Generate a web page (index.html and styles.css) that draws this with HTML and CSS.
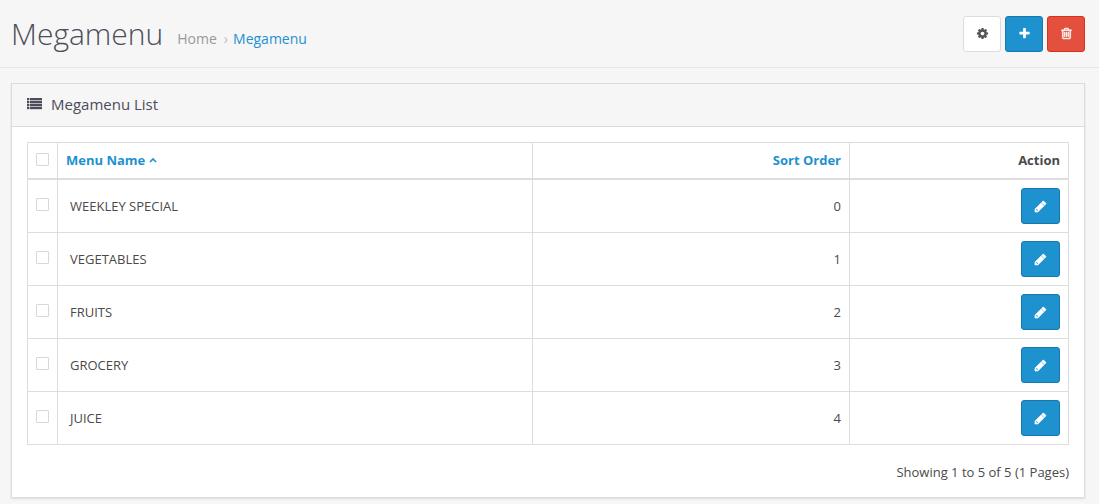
FILE: index.html
```html
<!DOCTYPE html>
<html lang="en">
<head>
    <meta charset="UTF-8">
    <meta name="viewport" content="width=device-width, initial-scale=1.0">
    <title>Megamenu</title>
    <link rel="stylesheet" href="styles.css">
</head>
<body>
    <!-- Icons -->
    <svg class="sprite" aria-hidden="true">
        <symbol id="cog" viewBox="0 0 1792 1792"><path d="M1152 896q0-106-75-181t-181-75-181 75-75 181 75 181 181 75 181-75 75-181zm512-109v222q0 12-8 23t-20 13l-185 28q-19 54-39 91 35 50 107 138 10 12 10 25t-9 23q-27 37-99 108t-94 71q-12 0-26-9l-138-108q-44 23-91 38-16 136-29 186-7 28-36 28h-222q-14 0-24.5-8.5t-11.5-21.5l-28-184q-49-16-90-37l-141 107q-10 9-25 9-14 0-25-11-126-114-165-168-7-10-7-23 0-12 8-23 15-21 51-66.5t54-70.5q-27-50-41-99l-183-27q-13-2-21-12.5t-8-23.5v-222q0-12 8-23t19-13l186-28q14-46 39-92-40-57-107-138-10-12-10-24 0-10 9-23 26-36 98.5-107.5t94.5-71.5q13 0 26 10l138 107q44-23 91-38 16-136 29-186 7-28 36-28h222q14 0 24.5 8.5t11.5 21.5l28 184q49 16 90 37l142-107q9-9 24-9 13 0 25 10 129 119 165 170 7 8 7 22 0 12-8 23-15 21-51 66.5t-54 70.5q26 50 41 98l183 28q13 2 21 12.5t8 23.5z"/></symbol>
        <symbol id="plus" viewBox="0 0 1792 1792"><path d="M1600 736v192q0 40-28 68t-68 28h-416v416q0 40-28 68t-68 28h-192q-40 0-68-28t-28-68v-416h-416q-40 0-68-28t-28-68v-192q0-40 28-68t68-28h416v-416q0-40 28-68t68-28h192q40 0 68 28t28 68v416h416q40 0 68 28t28 68z"/></symbol>
        <symbol id="trash" viewBox="0 0 1792 1792"><path stroke="currentColor" stroke-width="60" d="M704 736v576q0 14-9 23t-23 9h-64q-14 0-23-9t-9-23v-576q0-14 9-23t23-9h64q14 0 23 9t9 23zm256 0v576q0 14-9 23t-23 9h-64q-14 0-23-9t-9-23v-576q0-14 9-23t23-9h64q14 0 23 9t9 23zm256 0v576q0 14-9 23t-23 9h-64q-14 0-23-9t-9-23v-576q0-14 9-23t23-9h64q14 0 23 9t9 23zm128 724v-948h-896v948q0 22 7 40.5t14.5 27 10.5 8.5h832q3 0 10.5-8.5t14.5-27 7-40.5zm-672-1076h448l-48-117q-7-9-17-11h-317q-10 2-17 11zm928 32v64q0 14-9 23t-23 9h-96v948q0 83-47 143.5t-113 60.5h-832q-66 0-113-58.5t-47-141.5v-952h-96q-14 0-23-9t-9-23v-64q0-14 9-23t23-9h309l70-167q15-37 54-63t79-26h320q40 0 79 26t54 63l70 167h309q14 0 23 9t9 23z"/></symbol>
        <symbol id="pencil" viewBox="0 0 1792 1792"><path stroke="currentColor" stroke-width="70" d="M491 1536l91-91-235-235-91 91v107h128v128h107zM960 416l416 416-832 832h-416v-416zm683 96q0 53-37 90l-166 166-416-416 166-165q36-38 90-38 53 0 91 38l235 234q37 39 37 91z"/></symbol>
        <symbol id="list" viewBox="0 0 15 12"><path d="M0 0h2v2H0zM3 0h12v2H3zM0 3h2v2H0zM3 3h12v2H3zM0 6h2v2H0zM3 6h12v2H3zM0 9h2v2H0zM3 9h12v2H3z" stroke="currentColor" stroke-width="0.4"/></symbol>
        <symbol id="caret" viewBox="0 0 8 5"><path d="M1 4l3-3 3 3" fill="none" stroke="currentColor" stroke-width="1.7"/></symbol>
    </svg>

    <div class="page-header">
        <h1>Megamenu</h1>
        <ul class="breadcrumb">
            <li><a href="#">Home</a></li>
            <li><a href="#" class="current">Megamenu</a></li>
        </ul>
        <div class="buttons">
            <button type="button" class="btn btn-default" title="Settings" aria-label="Settings"><svg class="icon"><use href="#cog"/></svg></button>
            <button type="button" class="btn btn-primary" title="Add New" aria-label="Add New"><svg class="icon"><use href="#plus"/></svg></button>
            <button type="button" class="btn btn-danger" title="Delete" aria-label="Delete"><svg class="icon"><use href="#trash"/></svg></button>
        </div>
    </div>

    <div class="panel">
        <div class="panel-heading">
            <svg class="icon-list"><use href="#list"/></svg>
            <h3>Megamenu List</h3>
        </div>
        <div class="panel-body">
            <table>
                <thead>
                    <tr>
                        <th class="col-check"><input type="checkbox" aria-label="Select all"></th>
                        <th class="col-name"><a href="#">Menu Name<svg class="caret"><use href="#caret"/></svg></a></th>
                        <th class="col-sort"><a href="#">Sort Order</a></th>
                        <th class="col-action">Action</th>
                    </tr>
                </thead>
                <tbody>
                    <tr>
                        <td class="col-check"><input type="checkbox" id="menu1"></td>
                        <td class="col-name"><label for="menu1">WEEKLEY SPECIAL</label></td>
                        <td class="col-sort">0</td>
                        <td class="col-action"><button type="button" class="btn btn-primary" aria-label="Edit"><svg class="icon"><use href="#pencil"/></svg></button></td>
                    </tr>
                    <tr>
                        <td class="col-check"><input type="checkbox" id="menu2"></td>
                        <td class="col-name"><label for="menu2">VEGETABLES</label></td>
                        <td class="col-sort">1</td>
                        <td class="col-action"><button type="button" class="btn btn-primary" aria-label="Edit"><svg class="icon"><use href="#pencil"/></svg></button></td>
                    </tr>
                    <tr>
                        <td class="col-check"><input type="checkbox" id="menu3"></td>
                        <td class="col-name"><label for="menu3">FRUITS</label></td>
                        <td class="col-sort">2</td>
                        <td class="col-action"><button type="button" class="btn btn-primary" aria-label="Edit"><svg class="icon"><use href="#pencil"/></svg></button></td>
                    </tr>
                    <tr>
                        <td class="col-check"><input type="checkbox" id="menu4"></td>
                        <td class="col-name"><label for="menu4">GROCERY</label></td>
                        <td class="col-sort">3</td>
                        <td class="col-action"><button type="button" class="btn btn-primary" aria-label="Edit"><svg class="icon"><use href="#pencil"/></svg></button></td>
                    </tr>
                    <tr>
                        <td class="col-check"><input type="checkbox" id="menu5"></td>
                        <td class="col-name"><label for="menu5">JUICE</label></td>
                        <td class="col-sort">4</td>
                        <td class="col-action"><button type="button" class="btn btn-primary" aria-label="Edit"><svg class="icon"><use href="#pencil"/></svg></button></td>
                    </tr>
                </tbody>
            </table>
            <p class="results">Showing 1 to 5 of 5 (1 Pages)</p>
        </div>
    </div>
</body>
</html>
```
FILE: styles.css
```css
* {
    box-sizing: border-box;
}
body {
    margin: 0;
    background-color: #f6f6f6;
    color: #4c4d5a;
    font-family: "Open Sans", sans-serif;
    font-size: 13px;
    line-height: 19px;
}
a {
    color: #1e91cf;
    text-decoration: none;
}
.sprite {
    display: none;
}

/* Header */
.page-header {
    display: flex;
    align-items: center;
    height: 68px;
    padding: 0 14px 0 11px;
    border-bottom: 1px solid #e7e7e7;
}
h1 {
    margin: 0;
    font-size: 30px;
    font-weight: 300;
    line-height: 38px;
}
.breadcrumb {
    display: flex;
    margin: 0;
    padding: 10px 0 0 14px;
    list-style: none;
    font-size: 14px;
}
.breadcrumb a {
    color: #999;
}
.breadcrumb a.current {
    color: #1e91cf;
}
.breadcrumb li + li::before {
    content: "›";
    padding: 0 5px 0 7px;
    color: #bbb;
}
.buttons {
    display: flex;
    gap: 4px;
    margin-left: auto;
}

/* Buttons */
.btn {
    display: inline-flex;
    align-items: center;
    justify-content: center;
    width: 38px;
    height: 36px;
    padding: 0;
    border: 1px solid;
    border-radius: 3px;
    vertical-align: top;
    cursor: pointer;
}
.btn-default {
    background-color: #fff;
    border-color: #ddd;
    color: #555;
}
.btn-primary {
    background-color: #1e91cf;
    border-color: #1978ab;
    color: #fff;
}
.btn-danger {
    background-color: #e4503e;
    border-color: #dc2f1c;
    color: #fff;
}
.icon {
    width: 13px;
    height: 13px;
    fill: currentColor;
}

/* Panel */
.panel {
    margin: 15px 14px 7px 11px;
    background-color: #fff;
    border: 1px solid #dcdcdc;
    box-shadow: 0 1px 2px rgba(0, 0, 0, 0.1);
}
.panel-heading {
    display: flex;
    align-items: center;
    gap: 9px;
    height: 43px;
    padding: 0 15px 2px;
    background-color: #f6f6f6;
    border-bottom: 1px solid #dcdcdc;
}
.icon-list {
    width: 15px;
    height: 12px;
    fill: currentColor;
}
h3 {
    margin: 0;
    font-size: 15px;
    font-weight: 400;
}
.panel-body {
    padding: 15px;
}

/* Table */
table {
    width: 100%;
    border-collapse: collapse;
    table-layout: fixed;
}
th, td {
    height: 53px;
    padding: 8px;
    border: 1px solid #ddd;
    color: #4a4a4a;
    text-align: right;
}
th {
    height: 36px;
    border-bottom-width: 2px;
    font-weight: 700;
}
.col-check {
    width: 30px;
    text-align: center;
}
.col-name {
    text-align: left;
}
td.col-name {
    padding-left: 12px;
}
.col-sort {
    width: 317px;
}
.col-action {
    width: 219px;
}
td .btn {
    width: 39px;
}
.caret {
    width: 8px;
    height: 5px;
    margin-left: 4px;
    vertical-align: 2px;
}
input[type="checkbox"] {
    display: block;
    width: 13px;
    height: 13px;
    margin: 0 auto 3px;
    appearance: none;
    background-color: #fff;
    border: 1px solid #d8d8d8;
    border-radius: 1px;
}
input[type="checkbox"]:checked {
    background-color: #1e91cf;
}
.results {
    margin: 18px 0 0;
    color: #4a4a4a;
    text-align: right;
}
```
